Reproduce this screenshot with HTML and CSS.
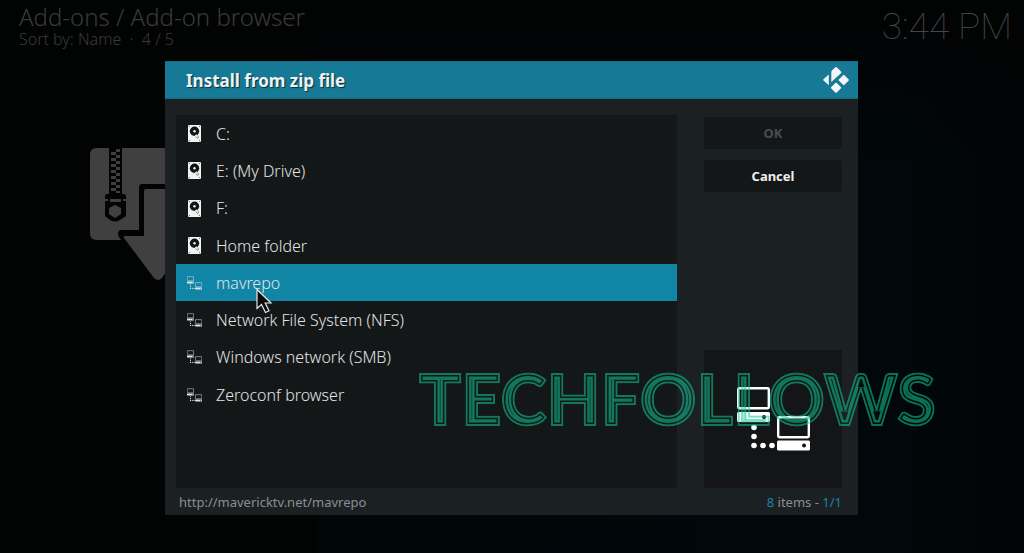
FILE: index.html
```
<!DOCTYPE html>
<html lang="en">
<head>
  <meta charset="UTF-8">
  <meta name="viewport" content="width=device-width, initial-scale=1.0">
  <title>Add-on browser</title>
  <link rel="stylesheet" href="styles.css">
</head>
<body>

<svg class="defs" aria-hidden="true">
  <symbol id="drive" viewBox="0 0 13 17">
    <rect width="13" height="17" rx="1" fill="#f2f2f2"/>
    <circle cx="6.5" cy="6.3" r="4.7" fill="#111516"/>
    <circle cx="6.5" cy="6.3" r="1.2" fill="#f2f2f2"/>
    <path d="M6.5 11l2-1.8 2.4 4.2-1.3.8z" fill="#f2f2f2"/>
    <path d="M7.5 11.5l2.7 2.4M9.8 10.5l.8 2.6" stroke="#777" stroke-width=".8"/>
    <path d="M1 1h1v1H1zM11 1h1v1h-1zM1 15h1v1H1zM11 15h1v1h-1z" fill="#777"/>
  </symbol>
  <symbol id="network" viewBox="0 0 73 64">
    <g fill="none" stroke="currentColor" stroke-width="2.4">
      <rect x="1.2" y="1.2" width="30.6" height="20" rx="1.2"/>
      <rect x="41.2" y="30.2" width="30.6" height="20" rx="1.2"/>
    </g>
    <g fill="currentColor">
      <path fill-rule="evenodd" d="M1.500 25h30q1.500 0 1.500 1.500v7q0 1.500-1.500 1.500h-30Q0 35 0 33.500v-7Q0 25 1.500 25zM27 28a2 2 0 1 0 .1 0z"/>
      <path fill-rule="evenodd" d="M41.500 53.500h30q1.500 0 1.500 1.500v7q0 1.500-1.500 1.500h-30q-1.500 0-1.500-1.500v-7q0-1.500 1.500-1.500zM67 56.500a2 2 0 1 0 .1 0z"/>
      <circle cx="17" cy="40.500" r="2.800"/>
      <circle cx="17" cy="49.500" r="2.800"/>
      <circle cx="17" cy="58.500" r="2.800"/>
      <circle cx="26" cy="58.500" r="2.800"/>
      <circle cx="35" cy="58.500" r="2.800"/>
    </g>
  </symbol>
</svg>

<header class="topbar">
  <div>
    <h1>Add-ons / Add-on browser</h1>
    <p>Sort by: Name &nbsp;·&nbsp; 4 / 5</p>
  </div>
  <time class="clock">3:44 PM</time>
</header>

<main class="backdrop">
  <svg class="zip" viewBox="0 0 136 134" aria-hidden="true">
    <rect width="136" height="92" rx="6" fill="#404040"/>
    <path fill="#020303" d="M19 0h13v46h2q2 0 2 2v20l-6 4q-5 3-10 0l-5-4V48q0-2 2-2h2z"/>
    <path fill="#404040" d="M21 4h5v3h-5zM21 10h5v3h-5zM21 16h5v3h-5zM21 22h5v3h-5zM21 28h5v3h-5zM21 34h5v3h-5zM21 40h5v3h-5zM26 1h4v3h-4zM26 7h4v3h-4zM26 13h4v3h-4zM26 19h4v3h-4zM26 25h4v3h-4zM26 31h4v3h-4zM26 37h4v3h-4zM26 43h4v2h-4zM20 51h11v3H20zM15 51h3v2h-3zM33 51h3v2h-3zM25 57l6 3v6l-6 4-6-4v-6z"/>
    <path fill="#020303" d="M52 36h35v46h20q4 2 2 8l-6 2-68 4q-11-10-5-14h19V40q0-4 3-4z"/>
    <path fill="#404040" d="M56 41h24q2 0 2 2v45h18l-28 42q-4 4-8 0L34 90q-1-2 1-2h19V43q0-2 2-2z"/>
  </svg>
</main>

<div class="overlay">
  <section class="dialog" role="dialog" aria-labelledby="title">
    <div class="dialog-head">
      <h2 id="title">Install from zip file</h2>
      <svg class="logo" viewBox="0 0 26 26" aria-hidden="true">
        <g fill="#f2f6f8">
          <path d="M12 .6q1-1 2 0l4 4q.7.800 0 1.600L8.300 15V5q0-1 .6-1.600z"/>
          <path d="M5.800 7.500v10.800L.5 13.500q-.7-.6 0-1.300z"/>
          <path d="M20 8.200q.8-.7 1.500 0l4 4q.7.700 0 1.500l-4 4q-.7.700-1.500 0l-4-4q-.7-.8 0-1.500z"/>
          <path d="M12.300 16q.8-.7 1.500 0l4 4q.7.700 0 1.500l-4 4q-.7.700-1.500 0l-4-4q-.7-.8 0-1.500z"/>
        </g>
      </svg>
    </div>

    <div class="dialog-body">
      <ul class="files">
        <li><button><svg class="drive"><use href="#drive"/></svg>C:</button></li>
        <li><button><svg class="drive"><use href="#drive"/></svg>E: (My Drive)</button></li>
        <li><button><svg class="drive"><use href="#drive"/></svg>F:</button></li>
        <li><button><svg class="drive"><use href="#drive"/></svg>Home folder</button></li>
        <li><button class="selected"><svg class="net"><use href="#network"/></svg>mavrepo</button></li>
        <li><button><svg class="net"><use href="#network"/></svg>Network File System (NFS)</button></li>
        <li><button><svg class="net"><use href="#network"/></svg>Windows network (SMB)</button></li>
        <li><button><svg class="net"><use href="#network"/></svg>Zeroconf browser</button></li>
      </ul>
      <div class="side">
        <button class="action" disabled>OK</button>
        <button class="action">Cancel</button>
        <div class="preview">
          <svg><use href="#network"/></svg>
        </div>
      </div>
    </div>

    <div class="dialog-foot">
      <span>http://mavericktv.net/mavrepo</span>
      <span><b>8</b> items - <b>1/1</b></span>
    </div>
  </section>
</div>

<svg class="watermark" width="540" height="80">
  <mask id="stripes" maskUnits="userSpaceOnUse" x="0" y="0" width="540" height="80">
    <g class="mark">
      <text class="ring-in" x="9" y="64">TECHFOLLOWS</text>
      <text class="gap" x="9" y="64">TECHFOLLOWS</text>
      <text class="ring-out" x="9" y="64">TECHFOLLOWS</text>
    </g>
  </mask>
  <text class="mark mark-ink" x="9" y="64" mask="url(#stripes)">TECHFOLLOWS</text>
</svg>

<svg class="cursor" viewBox="0 0 17 26" aria-hidden="true">
  <path d="M1 1.500v19l4.500-4 4 8 3.500-1.700-3.800-7.800H15z" fill="#0b0b0b" stroke="#e8e8e8" stroke-width="1.200"/>
</svg>

</body>
</html>
```

FILE: styles.css
```
* { box-sizing: border-box; }
body { margin: 0; min-height: 100vh; position: relative; overflow: hidden; font-family: "Noto Sans", sans-serif; color: #e4e4e4; background: linear-gradient(180deg, #020303, transparent 30%), linear-gradient(90deg, #020303 31%, #010609 31%, #01070a 88%, #010405 100%); }
h1, h2, p, ul { margin: 0; padding: 0; font-weight: 300; }
button { font: inherit; color: inherit; border: 0; border-radius: 0; }
.defs { position: absolute; width: 0; height: 0; }

.topbar { display: flex; justify-content: space-between; padding: 3px 12px 0 19px; color: #3a3a3a; }
.topbar h1 { font-size: 24px; line-height: 28px; }
.topbar p { font-size: 16px; line-height: 16px; }
.clock { font-family: Roboto, sans-serif; font-weight: 100; font-size: 37px; line-height: 48px; color: #454545; }
.backdrop { padding: 97px 0 0 90px; }
.zip { display: block; width: 136px; height: 134px; }

.overlay { position: absolute; inset: 0; display: flex; justify-content: center; align-items: flex-start; padding: 61px 166px 0 165px; }
.dialog { width: 100%; background: #1b2123; }
.dialog-head { display: flex; align-items: center; justify-content: space-between; height: 38px; padding: 0 9px 0 21px; background: #167995; border: 1px solid #126b85; border-width: 1px 0; }
.dialog-head h2 { font-size: 17px; font-weight: 700; color: #eef2f4; text-shadow: 1px 1px 1px #0a2f3b; }
.logo { width: 26px; height: 26px; }

.dialog-body { display: flex; gap: 27px; padding: 16px 16px 0 11px; }
.files { flex: 1; height: 373px; display: grid; grid-template-rows: repeat(10, 1fr); list-style: none; background: #131718; border-radius: 2px; }
.files li { display: grid; }
.files button { display: flex; align-items: center; padding: 0 11px; background: none; font-size: 16px; font-weight: 300; text-align: left; }
.files button.selected { background: #1085a6; }
.files .drive { width: 15px; height: 17px; margin-right: 14px; }
.files .net { width: 15px; height: 14px; margin-right: 14px; }

.side { width: 138px; display: flex; flex-direction: column; gap: 11px; padding-top: 2px; }
.action { height: 32px; background: #131718; border-radius: 2px; font-size: 13px; font-weight: 700; color: #f0f0f0; }
.action:disabled { color: #4a4d4e; }
.preview { display: flex; align-items: center; justify-content: center; height: 138px; margin-top: auto; background: #131516; color: #fff; }
.preview svg { width: 73px; height: 64px; }

.dialog-foot { display: flex; justify-content: space-between; padding: 1px 16px 0 14px; font-size: 13px; line-height: 26px; color: #8b8e8f; }
.dialog-foot b { font-weight: 400; color: #1585a8; }

.watermark { position: absolute; left: 410px; top: 361px; opacity: .55; pointer-events: none; }
.mark { font-family: Lato, sans-serif; font-weight: 900; font-size: 70px; }
.mark-ink { fill: #10c896; stroke: #10c896; stroke-width: 2px; }
.mark .ring-in { fill: #000; stroke: #fff; stroke-width: 10px; }
.mark .gap { fill: none; stroke: #000; stroke-width: 5px; }
.mark .ring-out { fill: none; stroke: #fff; stroke-width: 2px; }
.cursor { position: absolute; left: 256px; top: 288px; width: 17px; height: 26px; pointer-events: none; }
```
